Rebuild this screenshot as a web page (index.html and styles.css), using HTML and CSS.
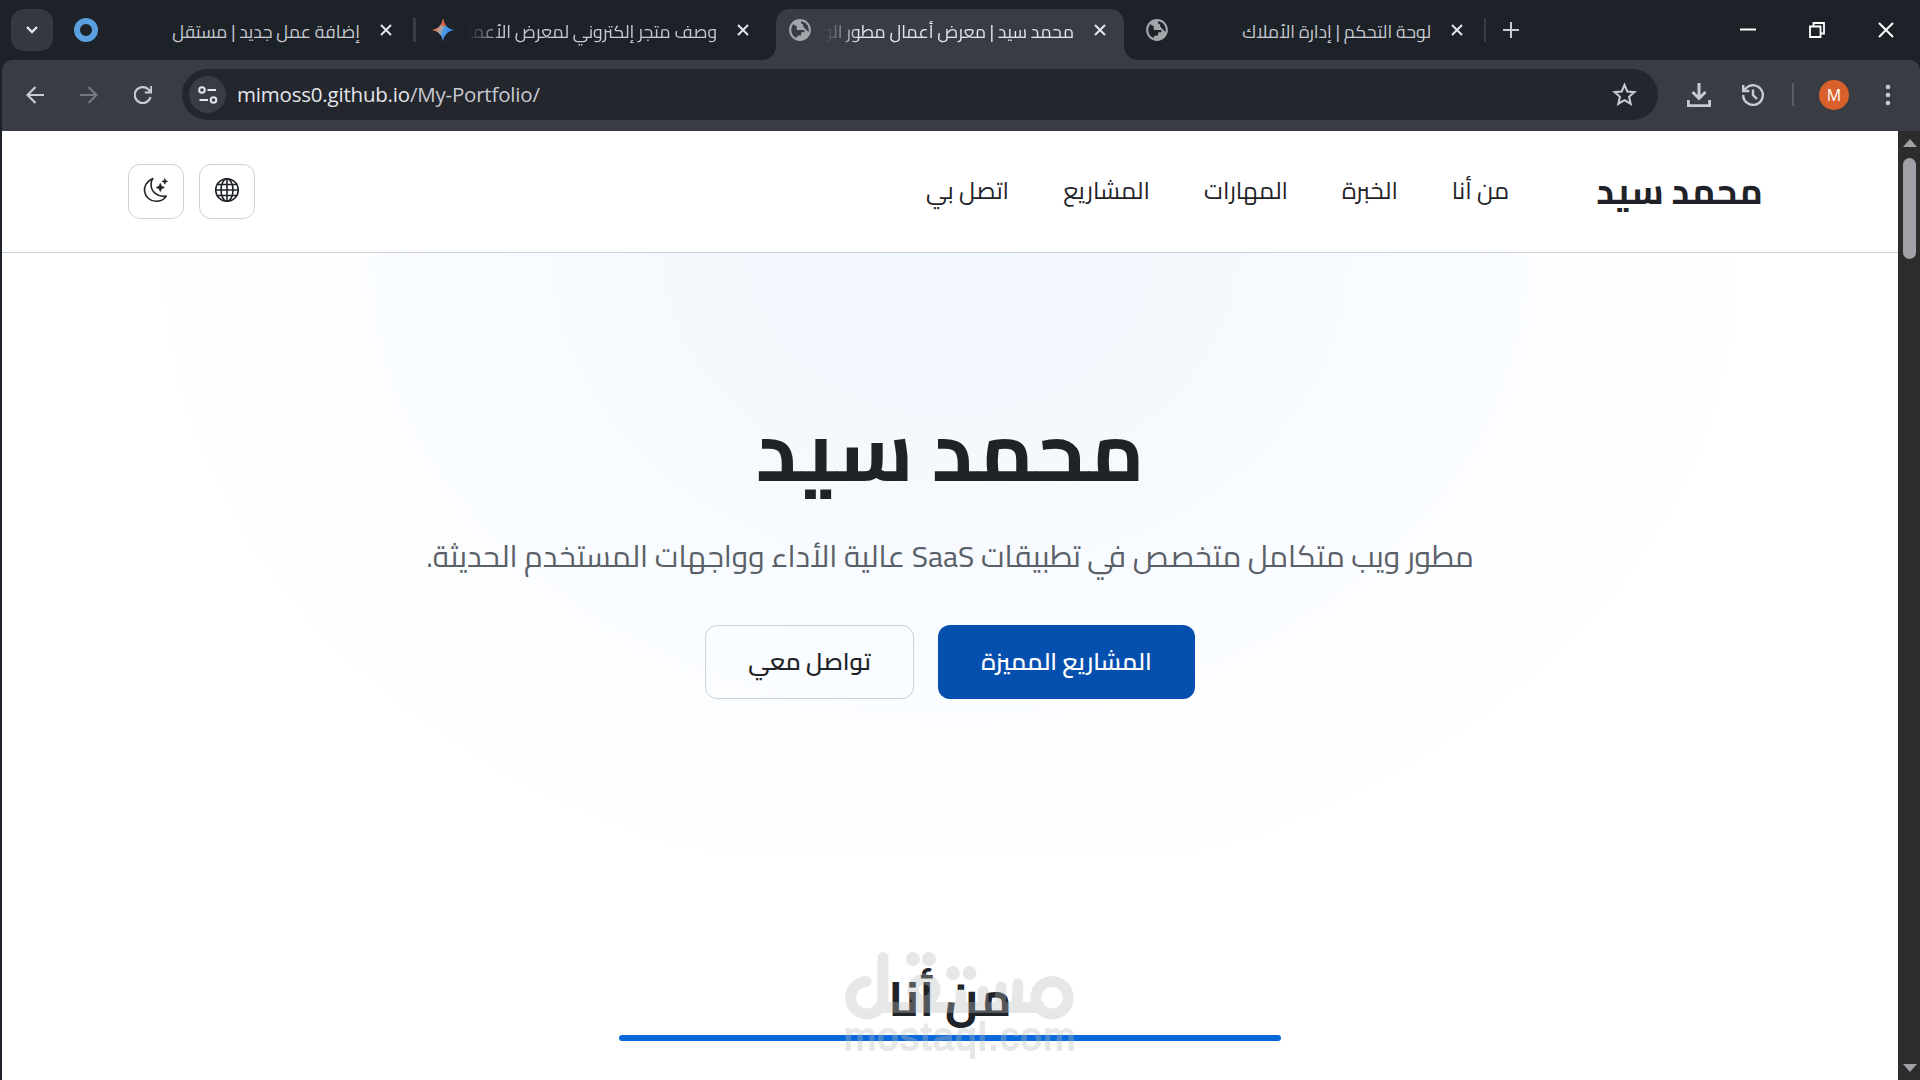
FILE: index.html
```html
<!DOCTYPE html>
<html lang="ar" dir="rtl">
<head>
    <meta charset="UTF-8">
    <meta name="viewport" content="width=device-width, initial-scale=1.0">
    <title>محمد سيد | معرض أعمال مطور الويب</title>
    <link rel="stylesheet" href="styles.css">
</head>
<body>
    <div class="browser" dir="ltr">
        <div class="tab-strip">
            <button class="tab-search">
                <svg width="14" height="10" viewBox="0 0 14 10"><path d="M2 2l5 5 5-5" fill="none" stroke="#e3e5ea" stroke-width="2.4"/></svg>
            </button>
            <div class="tab tab-first">
                <svg class="favicon" viewBox="0 0 24 24"><circle cx="12" cy="12" r="9" fill="none" stroke="#5a9fe0" stroke-width="6"/></svg>
                <span class="tab-title" dir="rtl">إضافة عمل جديد | مستقل</span>
                <svg class="tab-close" viewBox="0 0 12 12"><path d="M1 1l10 10M11 1L1 11"/></svg>
            </div>
            <i class="tab-divider"></i>
            <div class="tab tab-second">
                <svg class="favicon" viewBox="0 0 24 24">
                    <defs><linearGradient id="spark" x1="0" y1="0.3" x2="1" y2="0.7"><stop offset="0.1" stop-color="#ee6b3b"/><stop offset="0.42" stop-color="#a9a3a5"/><stop offset="0.55" stop-color="#4a9ae8"/><stop offset="1" stop-color="#2b7de0"/></linearGradient></defs>
                    <path d="M12 .5C13 7 17 11 23.5 12 17 13 13 17 12 23.5 11 17 7 13 .5 12 7 11 11 7 12 .5z" fill="url(#spark)"/>
                    <path d="M12 .5C13 4 13.5 6 15 8L10 8C11 6 11.5 4 12 .5z" fill="#e8603a"/>
                </svg>
                <span class="tab-title faded" dir="rtl">وصف متجر إلكتروني لمعرض الأعمال</span>
                <svg class="tab-close" viewBox="0 0 12 12"><path d="M1 1l10 10M11 1L1 11"/></svg>
            </div>
            <div class="tab tab-active">
                <svg class="favicon" viewBox="1 1 22 22"><path class="globe" d="M12 2C6.48 2 2 6.48 2 12s4.48 10 10 10 10-4.48 10-10S17.52 2 12 2zm-1 17.93c-3.95-.49-7-3.85-7-7.93 0-.62.08-1.21.21-1.79L9 15v1c0 1.1.9 2 2 2v1.93zm6.9-2.54c-.26-.81-1-1.39-1.9-1.39h-1v-3c0-.55-.45-1-1-1H8v-2h2c.55 0 1-.45 1-1V7h2c1.1 0 2-.9 2-2v-.41c2.93 1.19 5 4.06 5 7.41 0 2.08-.8 3.97-2.1 5.39z" transform="rotate(180 12 12)"/></svg>
                <span class="tab-title faded" dir="rtl">محمد سيد | معرض أعمال مطور الويب</span>
                <svg class="tab-close" viewBox="0 0 12 12"><path d="M1 1l10 10M11 1L1 11"/></svg>
            </div>
            <div class="tab tab-last">
                <svg class="favicon" viewBox="1 1 22 22"><path class="globe" d="M12 2C6.48 2 2 6.48 2 12s4.48 10 10 10 10-4.48 10-10S17.52 2 12 2zm-1 17.93c-3.95-.49-7-3.85-7-7.93 0-.62.08-1.21.21-1.79L9 15v1c0 1.1.9 2 2 2v1.93zm6.9-2.54c-.26-.81-1-1.39-1.9-1.39h-1v-3c0-.55-.45-1-1-1H8v-2h2c.55 0 1-.45 1-1V7h2c1.1 0 2-.9 2-2v-.41c2.93 1.19 5 4.06 5 7.41 0 2.08-.8 3.97-2.1 5.39z" transform="rotate(180 12 12)"/></svg>
                <span class="tab-title" dir="rtl">لوحة التحكم | إدارة الأملاك</span>
                <svg class="tab-close" viewBox="0 0 12 12"><path d="M1 1l10 10M11 1L1 11"/></svg>
            </div>
            <i class="tab-divider thin"></i>
            <svg class="new-tab" viewBox="0 0 16 16"><path d="M8 0v16M0 8h16"/></svg>
            <div class="window-controls">
                <svg width="16" height="16" viewBox="0 0 16 16"><path d="M0 7.5h16" stroke-width="2"/></svg>
                <svg width="16" height="16" viewBox="0 0 16 16"><path d="M1 4.5h10.5V15H1zM4.5 4.5V1H15v10.5h-3.5" stroke-width="1.8"/></svg>
                <svg width="16" height="16" viewBox="0 0 16 16"><path d="M1 1l14 14M15 1L1 15" stroke-width="2"/></svg>
            </div>
        </div>

        <div class="toolbar">
            <svg class="nav-icon" viewBox="0 0 18 18"><path d="M18 9H1.5M9.5 1L1.5 9l8 8"/></svg>
            <svg class="nav-icon dim" viewBox="0 0 18 18"><path d="M0 9h16.5M8.5 1l8 8-8 8"/></svg>
            <svg class="nav-icon" viewBox="0 0 18 18"><path d="M16.5 11A8 8 0 1 1 14.5 3.5L17 6M17.3 0v6.5h-6.5"/></svg>
            <div class="omnibox">
                <span class="site-info">
                    <svg width="20" height="18" viewBox="0 0 20 18"><g fill="none" stroke="#e3e5ea" stroke-width="2"><circle cx="4" cy="4" r="2.8"/><path d="M9.5 4H18M1.5 14H10"/><circle cx="15.5" cy="14" r="2.8"/></g></svg>
                </span>
                <span class="url">mimoss0.github.io<span>/My-Portfolio/</span></span>
                <svg class="star" viewBox="0 0 24 24"><path d="M12 2.8l2.7 6.3 6.8.6-5.1 4.5 1.5 6.7L12 17.4l-5.9 3.5 1.5-6.7-5.1-4.5 6.8-.6z"/></svg>
            </div>
            <svg class="download" viewBox="0 0 24 24"><path d="M12 0v15M5.5 9l6.5 6.5L18.5 9M1.3 17v5.7h21.4V17"/></svg>
            <svg class="history" viewBox="0 0 22 22"><path d="M1.2 11a9.8 9.8 0 1 0 3-7L1.5 6.5M1.2 1v6h6M11 5.5V11l4 4"/></svg>
            <i class="bar-divider"></i>
            <span class="avatar">M</span>
            <svg class="dots" viewBox="0 0 6 22"><circle cx="3" cy="3" r="2.3"/><circle cx="3" cy="11" r="2.3"/><circle cx="3" cy="19" r="2.3"/></svg>
        </div>

        <div class="viewport">
            <div class="page" dir="rtl">
                <header class="site-header">
                    <a class="logo">محمد سيد</a>
                    <nav class="site-nav">
                        <a class="n1">من أنا</a>
                        <a class="n2">الخبرة</a>
                        <a class="n3">المهارات</a>
                        <a class="n4">المشاريع</a>
                        <a class="n5">اتصل بي</a>
                    </nav>
                    <div class="actions">
                        <button class="icon-btn">
                            <svg width="26" height="26" viewBox="0 0 26 26"><g fill="none" stroke="#1f2328" stroke-width="1.6"><circle cx="13" cy="13" r="11.3"/><ellipse cx="13" cy="13" rx="6" ry="11.3"/><path d="M13 1.7v22.6M1.7 13h22.6M3.5 7.5h19M3.5 18.5h19"/></g></svg>
                        </button>
                        <button class="icon-btn">
                            <svg width="26" height="26" viewBox="0 0 26 26"><path d="M9.8 1.6C3.5 4 .8 9.8 1.6 14.6c.9 5.5 5.5 9.7 11.4 9.7 4.5 0 8.3-2.3 10.3-5.2C15 20.7 7.2 14.5 8.1 6.1c.2-1.7.8-3.2 1.7-4.5z" fill="none" stroke="#1f2328" stroke-width="1.6" stroke-linejoin="round"/><path d="M17.3 6.3l1.2 2.9 2.9 1.3-2.9 1.2-1.2 2.9-1.2-2.9-2.9-1.2 2.9-1.3zM21.8 1.6l.8 2 2 .8-2 .8-.8 2-.8-2-2-.8 2-.8z" fill="#1f2328" stroke="#1f2328" stroke-width=".7"/></svg>
                        </button>
                    </div>
                </header>

                <section class="hero">
                    <h1>محمد سيد</h1>
                    <p class="subtitle">مطور ويب متكامل متخصص في تطبيقات SaaS عالية الأداء وواجهات المستخدم الحديثة.</p>
                    <div class="hero-buttons">
                        <a class="btn btn-primary">المشاريع المميزة</a>
                        <a class="btn btn-outline">تواصل معي</a>
                    </div>
                </section>

                <section class="about">
                    <h2>من أنا</h2>
                    <div class="title-line"></div>
                    <div class="watermark" dir="ltr">
                        <svg width="230" height="68" viewBox="0 0 230 68">
                            <g fill="none" stroke="#b9bcbb" stroke-width="11" stroke-linecap="round">
                                <path d="M22 29.5A16.2 16.2 0 1 0 39 46V5.5"/>
                                <path d="M39 55.5H200" stroke-linecap="butt"/>
                                <circle cx="80" cy="38" r="11"/>
                                <path d="M117 55V42M139 55V39M156 55L157 35M173 55L174 32"/>
                                <circle cx="208" cy="45.7" r="16.2"/>
                            </g>
                            <g fill="#b9bcbb"><circle cx="69" cy="7" r="7"/><circle cx="85" cy="7" r="7"/><circle cx="109" cy="21" r="7"/><circle cx="125.5" cy="21" r="7"/></g>
                        </svg>
                        <span>mostaql.com</span>
                    </div>
                </section>
            </div>
            <div class="scrollbar">
                <i class="arrow-up"></i>
                <i class="thumb"></i>
                <i class="arrow-down"></i>
            </div>
        </div>
    </div>
</body>
</html>
```

FILE: styles.css
```css
* {
    margin: 0;
    padding: 0;
    box-sizing: border-box;
}

body {
    width: 1920px;
    height: 1080px;
    overflow: hidden;
    background-color: #1d2027;
    font-family: 'Cairo', 'DejaVu Sans', sans-serif;
    color: #1f2328;
}

svg {
    display: block;
    flex-shrink: 0;
}

button {
    border: none;
    cursor: pointer;
}

.browser {
    width: 1920px;
    height: 1080px;
    display: flex;
    flex-direction: column;
    background-color: #1d2128;
}

/* Tabs */
.tab-strip {
    height: 60px;
    display: flex;
    align-items: center;
    padding-left: 11px;
}

.tab-search {
    width: 42px;
    height: 42px;
    border-radius: 13px;
    background-color: #363840;
    display: flex;
    align-items: center;
    justify-content: center;
}

.tab {
    height: 51px;
    display: flex;
    align-items: center;
    color: #c7cad1;
}

.tab-first {
    width: 318px;
    margin-left: 21px;
}

.tab-second {
    width: 318px;
    margin-left: 15px;
}

.tab-active {
    width: 348px;
    margin: 9px 0 0 27px;
    padding: 0 18px 9px 12px;
    border-radius: 14px 14px 0 0;
    background-color: #3a3c44;
    color: #e3e5ea;
    position: relative;
}

.tab-active::before,
.tab-active::after {
    content: '';
    position: absolute;
    bottom: 0;
    width: 13px;
    height: 13px;
}

.tab-active::before {
    left: -13px;
    background: radial-gradient(circle at 0 0, transparent 12.5px, #3a3c44 13px);
}

.tab-active::after {
    right: -13px;
    background: radial-gradient(circle at 100% 0, transparent 12.5px, #3a3c44 13px);
}

.tab-last {
    width: 318px;
    margin-left: 21px;
}

.favicon {
    width: 24px;
    height: 24px;
}

.globe {
    fill: #a2a5aa;
}

.tab-title {
    flex: 1;
    height: 40px;
    margin-left: 13px;
    padding-top: 4px;
    overflow: hidden;
    white-space: nowrap;
    font-size: 17.6px;
    line-height: 36px;
}

.faded {
    -webkit-mask-image: linear-gradient(90deg, transparent, #000 34px);
    mask-image: linear-gradient(90deg, transparent, #000 34px);
}

.tab-close {
    width: 12px;
    height: 12px;
    margin-left: 20px;
    fill: none;
    stroke: #e3e5ea;
    stroke-width: 2;
}

.tab-divider {
    width: 3px;
    height: 24px;
    margin-left: 21px;
    background-color: #3a3c44;
}

.tab-divider.thin {
    width: 2px;
}

.new-tab {
    width: 16px;
    height: 16px;
    margin-left: 17px;
    fill: none;
    stroke: #c7cad1;
    stroke-width: 2;
}

.window-controls {
    display: flex;
    gap: 53px;
    margin-left: auto;
    padding-right: 26px;
}

.window-controls path {
    fill: none;
    stroke: #fff;
}

/* Toolbar */
.toolbar {
    height: 71px;
    margin-left: 2px;
    display: flex;
    align-items: center;
    padding: 0 0 2px 24px;
    border-radius: 10px 10px 0 0;
    background-color: #3a3c44;
}

.nav-icon {
    width: 18px;
    height: 18px;
    margin-right: 36px;
    fill: none;
    stroke: #c7cad1;
    stroke-width: 2.2;
}

.nav-icon.dim {
    stroke: #757881;
}

.omnibox {
    width: 1476px;
    height: 51px;
    margin-left: -6px;
    padding: 0 21px 0 7px;
    border-radius: 26px;
    background-color: #24262d;
    display: flex;
    align-items: center;
}

.site-info {
    width: 37px;
    height: 37px;
    border-radius: 50%;
    background-color: #3a3c44;
    display: flex;
    align-items: center;
    justify-content: center;
}

.url {
    flex: 1;
    margin-left: 11px;
    padding-bottom: 2px;
    color: #e3e5ea;
    font-family: 'Open Sans', 'Noto Sans', sans-serif;
    font-size: 20.5px;
    letter-spacing: -0.2px;
}

.url span {
    color: #c7cad1;
}

.star {
    width: 25px;
    height: 25px;
    fill: none;
    stroke: #c7cad1;
    stroke-width: 2;
}

.download,
.history {
    width: 24px;
    height: 24px;
    margin-left: 29px;
    fill: none;
    stroke: #c7cad1;
    stroke-width: 3;
}

.history {
    width: 22px;
    height: 22px;
    margin-left: 31px;
    stroke-width: 2.4;
}

.bar-divider {
    width: 2px;
    height: 23px;
    margin-left: 28px;
    background-color: #5b5d66;
}

.avatar {
    width: 30px;
    height: 30px;
    margin-left: 25px;
    border-radius: 50%;
    background-color: #d9602a;
    color: #fff;
    font: 16px/30px 'Open Sans', sans-serif;
    text-align: center;
}

.dots {
    width: 6px;
    height: 22px;
    margin-left: 36px;
    fill: #c7cad1;
}

/* Page area */
.viewport {
    flex: 1;
    display: flex;
    margin-left: 2px;
    background-color: #fff;
}

.page {
    width: 1896px;
    height: 949px;
    overflow: hidden;
}

.page a,
.page h1,
.page h2,
.page p {
    display: flex;
    align-items: center;
    justify-content: center;
    white-space: nowrap;
}

.site-header {
    height: 122px;
    display: flex;
    align-items: center;
    padding: 0 136px 2px 126px;
    border-bottom: 1px solid #c9d1d9;
}

.logo {
    width: 165px;
    font-size: 36px;
    font-weight: 700;
}

.site-nav {
    display: flex;
    gap: 54px;
    margin-right: 88px;
    font-size: 24px;
}

.n1 { width: 57px; }
.n2 { width: 56px; }
.n3 { width: 84px; }
.n4 { width: 87px; }
.n5 { width: 83px; }

.actions {
    display: flex;
    gap: 15px;
    margin: 2px auto 0 0;
}

.icon-btn {
    width: 56px;
    height: 55px;
    border: 1px solid #c9d1d9;
    border-radius: 12px;
    background-color: #fff;
    display: flex;
    align-items: center;
    justify-content: center;
    padding-bottom: 3px;
}

.hero {
    height: 600px;
    display: flex;
    flex-direction: column;
    align-items: center;
    padding-top: 147px;
    background: radial-gradient(ellipse 800px 640px at 50% 0, #f3f7fe 0%, #f5f9fe 35%, #f9fcff 60%, #fdfeff 90%, #fff 100%);
}

h1 {
    width: 380px;
    height: 100px;
    font-size: 84px;
    font-weight: 700;
}

.subtitle {
    width: 1047px;
    height: 50px;
    margin-top: 31px;
    color: #5a6067;
    font-size: 30px;
}

.hero-buttons {
    display: flex;
    gap: 24px;
    margin-top: 44px;
}

.btn {
    height: 74px;
    padding-bottom: 1px;
    border-radius: 12px;
    font-size: 24px;
    font-weight: 600;
}

.btn-primary {
    width: 257px;
    background-color: #0550ae;
    color: #fff;
}

.btn-outline {
    width: 209px;
    border: 1px solid #c9d1d9;
}

.about {
    height: 227px;
    display: flex;
    flex-direction: column;
    align-items: center;
    padding-top: 109px;
    position: relative;
}

h2 {
    height: 73px;
    padding-bottom: 2px;
    font-size: 48px;
    font-weight: 700;
}

.title-line {
    width: 662px;
    height: 6px;
    border-radius: 3px;
    background-color: #0969da;
}

.watermark {
    position: absolute;
    top: 99px;
    left: 842px;
    width: 232px;
    opacity: 0.34;
    color: #b9bcbb;
    font: 38.5px/33px 'Liberation Sans', sans-serif;
    letter-spacing: 1.3px;
    white-space: nowrap;
    -webkit-text-stroke: 1.8px #b9bcbb;
}

/* Scrollbar */
.scrollbar {
    width: 22px;
    display: flex;
    flex-direction: column;
    align-items: center;
    padding: 8px 0 8px 1px;
    background-color: #2c2c2c;
}

.arrow-up,
.arrow-down {
    border: 7.5px solid transparent;
    border-top: none;
    border-bottom: 8px solid #9fa1a6;
}

.arrow-down {
    margin-top: auto;
    border-bottom: none;
    border-top: 8px solid #9fa1a6;
}

.thumb {
    width: 13px;
    height: 101px;
    margin-top: 11px;
    border-radius: 7px;
    background-color: #9fa1a6;
}
```
